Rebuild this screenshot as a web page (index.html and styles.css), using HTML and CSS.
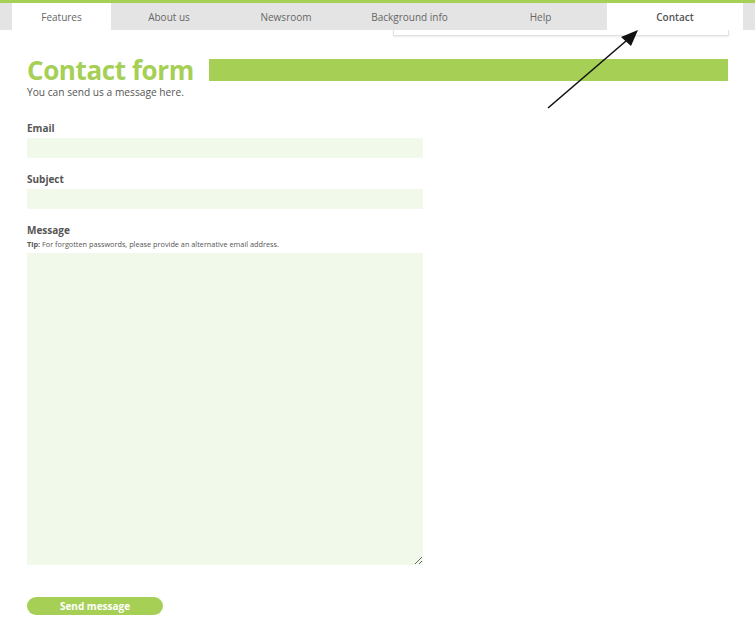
FILE: index.html
```html
<!DOCTYPE html>
<html lang="en">
<head>
    <meta charset="UTF-8">
    <title>Contact form</title>
    <link rel="stylesheet" href="styles.css">
</head>
<body>
    <!-- top strip -->
    <div class="topbar"></div>

    <!-- tabs -->
    <nav class="tabs">
        <a href="#" class="tab active">Features</a>
        <a href="#" class="tab">About us</a>
        <a href="#" class="tab">Newsroom</a>
        <a href="#" class="tab">Background info</a>
        <a href="#" class="tab">Help</a>
        <a href="#" class="tab active current">Contact</a>
    </nav>

    <div class="dropdown"></div>

    <svg class="arrow" width="755" height="633" viewBox="0 0 755 633">
        <line x1="548" y1="108" x2="626" y2="41" stroke="#111" stroke-width="1.6"/>
        <polygon points="638,30 621,37 631,46" fill="#111"/>
    </svg>

    <!-- content -->
    <main class="content">
        <div class="title-row">
            <h1>Contact form</h1>
            <div class="title-bar"></div>
        </div>
        <p class="intro">You can send us a message here.</p>

        <form class="form">
            <div class="field">
                <label for="email">Email</label>
                <input type="text" id="email">
            </div>
            <div class="field">
                <label for="subject">Subject</label>
                <input type="text" id="subject">
            </div>
            <div class="field">
                <label for="message">Message</label>
                <p class="tip"><b>Tip:</b> For forgotten passwords, please provide an alternative email address.</p>
                <textarea id="message"></textarea>
            </div>
            <button type="button" class="send">Send message</button>
        </form>
    </main>
</body>
</html>
```

FILE: styles.css
```css
* {
    margin: 0;
    padding: 0;
    box-sizing: border-box;
}

body {
    font-family: "Open Sans", "DejaVu Sans", sans-serif;
    color: #555;
    background: #fff;
    position: relative;
}

.topbar {
    height: 3px;
    background: #a6cf56;
}

/* tabs */
.tabs {
    display: grid;
    grid-template-columns: 12px 99px 116px 118px 129px 133px 136px 1fr;
    height: 27px;
    background: #e4e4e4;
}

.tabs::before {
    content: "";
}

.tab {
    display: flex;
    align-items: center;
    justify-content: center;
    font-size: 10px;
    color: #666;
    text-decoration: none;
}

.tab.active {
    background: #fff;
}

.tab.current {
    font-weight: 600;
    color: #555;
}

.dropdown {
    position: absolute;
    left: 393px;
    top: 30px;
    width: 336px;
    height: 6px;
    border: 1px solid #e2e2e2;
    border-top: none;
    box-shadow: 0 1px 2px rgba(0,0,0,0.08);
}

.arrow {
    position: absolute;
    left: 0;
    top: 0;
    pointer-events: none;
}

/* content */
.content {
    padding: 27px 27px 0;
}

.title-row {
    display: flex;
    align-items: flex-start;
    width: 701px;
}

h1 {
    font-size: 26px;
    line-height: 26px;
    font-weight: 700;
    color: #a6cf56;
    letter-spacing: -0.4px;
}

.title-bar {
    flex: 0 0 519px;
    height: 22px;
    margin-left: auto;
    margin-top: 2px;
    background: #a6cf56;
}

.intro {
    font-size: 10.2px;
    line-height: 12px;
    margin-top: 3px;
}

.form {
    margin-top: 23px;
    width: 396px;
}

.field {
    margin-bottom: 14px;
}

.field label {
    display: block;
    font-size: 10px;
    line-height: 14px;
    font-weight: 700;
    color: #555;
    margin-bottom: 3px;
}

.field input,
.field textarea {
    display: block;
    width: 100%;
    height: 20px;
    border: none;
    background: #f1f9ea;
    font-family: inherit;
}

.tip {
    font-size: 7.3px;
    line-height: 10px;
    margin-top: -1px;
    margin-bottom: 4px;
}

.field textarea {
    height: 312px;
    resize: vertical;
}

.send {
    display: block;
    margin-top: 32px;
    width: 136px;
    height: 18px;
    border: none;
    border-radius: 9px;
    background: #a6cf56;
    color: #fff;
    font-family: inherit;
    font-size: 10px;
    font-weight: 700;
}
```
